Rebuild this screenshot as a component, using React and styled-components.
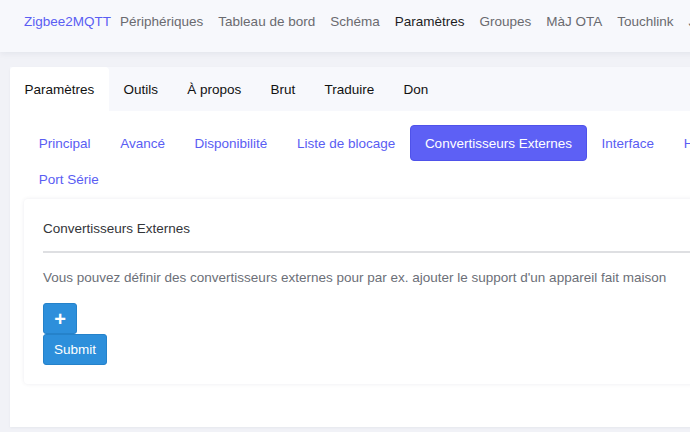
import React from "react";
import styled, { createGlobalStyle } from "styled-components";

const GlobalStyle = createGlobalStyle`
  html, body {
    margin: 0;
    padding: 0;
    overflow: hidden;
    background: #f1f2f7;
    font-family: "Liberation Sans", Arial, sans-serif;
    font-size: 13.5px;
  }
`;

const Page = styled.div`
  width: 1100px;
  min-height: 432px;
  background: #f1f2f7;
`;

const Navbar = styled.nav`
  display: flex;
  align-items: center;
  height: 52px;
  box-sizing: border-box;
  padding: 0 0 10px 24px;
  background: #f7f8fc;
  box-shadow: 0 2px 6px rgba(20, 30, 60, 0.06);
`;

const Brand = styled.a`
  color: #5a5df3;
  padding: 0 1.5px 0 0;
  text-decoration: none;
`;

const NavItem = styled.a`
  color: ${(p) => (p.active ? "#1d1d1f" : "#6a6a6f")};
  padding: 0 7.5px;
  text-decoration: none;
  white-space: nowrap;
`;

const Main = styled.main`
  padding: 15px 0 0 10px;
`;

const Card = styled.section`
  background: #ffffff;
  border-radius: 4px 4px 0 0;
  box-shadow: 0 1px 3px rgba(20, 30, 60, 0.05);
`;

const Tabs = styled.div`
  display: flex;
  background: #f7f8fc;
`;

const Tab = styled.div`
  display: flex;
  align-items: center;
  height: 44px;
  padding: 0 14.6px;
  color: #111;
  background: ${(p) => (p.active ? "#ffffff" : "transparent")};
  border-radius: 4px 4px 0 0;
`;

const Body = styled.div`
  padding: 14px 14px 43px;
`;

const Pills = styled.div`
  display: flex;
  flex-wrap: wrap;
  width: 840px;
  margin-bottom: 2px;
`;

const Pill = styled.a`
  display: flex;
  align-items: center;
  height: 36px;
  padding: 0 13.8px;
  box-sizing: border-box;
  white-space: nowrap;
  text-decoration: none;
  border-radius: 4px;
  color: ${(p) => (p.active ? "#ffffff" : "#5a5df3")};
  background: ${(p) => (p.active ? "#5d60f5" : "transparent")};
  border: 1px solid ${(p) => (p.active ? "#4f52ea" : "transparent")};
`;

const Panel = styled.div`
  background: #fff;
  border-radius: 4px;
  box-shadow: 0 0 4px rgba(20, 30, 60, 0.08);
  padding: 20px 19px 19px;
`;

const PanelTitle = styled.h5`
  margin: 0;
  padding: 2px 0 15px;
  font-size: 13.5px;
  font-weight: normal;
  color: #333539;
  border-bottom: 2px solid #dedfe2;
`;

const Help = styled.p`
  margin: 17px 0 18px;
  color: #6c6f78;
`;

const Button = styled.button`
  display: block;
  font-family: inherit;
  font-size: ${(p) => (p.icon ? "20px" : "13.5px")};
  font-weight: ${(p) => (p.icon ? "bold" : "normal")};
  color: #fff;
  background: #2d8fdb;
  border: 1px solid #2582ca;
  border-radius: 3px;
  height: 31px;
  width: ${(p) => (p.icon ? "34px" : "64px")};
  padding: 0;
  line-height: 1;
`;

const navItems = [
  "Périphériques",
  "Tableau de bord",
  "Schéma",
  "Paramètres",
  "Groupes",
  "MàJ OTA",
  "Touchlink",
  "Journaux",
];

const tabs = ["Paramètres", "Outils", "À propos", "Brut", "Traduire", "Don"];

const pills = [
  "Principal",
  "Avancé",
  "Disponibilité",
  "Liste de blocage",
  "Convertisseurs Externes",
  "Interface",
  "Home Assistant",
  "Port Série",
];

export default function App() {
  return (
    <Page>
      <GlobalStyle />
      <Navbar>
        <Brand>Zigbee2MQTT</Brand>
        {navItems.map((n) => (
          <NavItem key={n} active={n === "Paramètres"}>
            {n}
          </NavItem>
        ))}
      </Navbar>
      <Main>
        <Card>
          <Tabs>
            {tabs.map((t) => (
              <Tab key={t} active={t === "Paramètres"}>
                {t}
              </Tab>
            ))}
          </Tabs>
          <Body>
            <Pills>
              {pills.map((p) => (
                <Pill key={p} active={p === "Convertisseurs Externes"}>
                  {p}
                </Pill>
              ))}
            </Pills>
            <Panel>
              <PanelTitle>Convertisseurs Externes</PanelTitle>
              <Help>
                Vous pouvez définir des convertisseurs externes pour par ex. ajouter le
                support d'un appareil fait maison
              </Help>
              <Button icon>+</Button>
              <Button>Submit</Button>
            </Panel>
          </Body>
        </Card>
      </Main>
    </Page>
  );
}
